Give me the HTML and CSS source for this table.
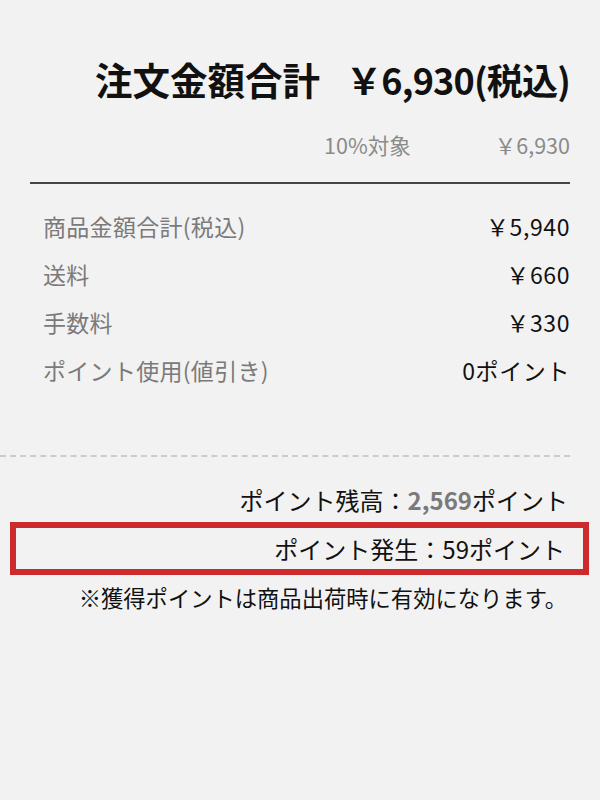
FILE: index.html
```html
<!DOCTYPE html>
<html lang="ja">
<head>
<meta charset="utf-8">
<link rel="stylesheet" href="styles.css">
</head>
<body>
<div class="summary">
  <div class="inner">
    <h1 class="total"><span class="total-label">注文金額合計</span><span class="total-value">￥6,930(税込)</span></h1>
    <div class="tax-row"><span class="tax-label">10%対象</span><span class="tax-value">￥6,930</span></div>
    <hr class="solid">
    <dl class="rows">
      <div class="row"><dt>商品金額合計(税込)</dt><dd>￥5,940</dd></div>
      <div class="row"><dt>送料</dt><dd>￥660</dd></div>
      <div class="row"><dt>手数料</dt><dd>￥330</dd></div>
      <div class="row"><dt>ポイント使用(値引き)</dt><dd>0ポイント</dd></div>
    </dl>
  </div>
  <hr class="dashed">
  <div class="points">
    <p class="balance">ポイント残高：<b>2,569</b>ポイント</p>
    <p class="earned">ポイント発生：59ポイント</p>
    <p class="note">※獲得ポイントは商品出荷時に有効になります。</p>
  </div>
</div>
</body>
</html>
```

FILE: styles.css
```css
html, body {
  margin: 0;
  padding: 0;
  background: #f2f2f2;
}
body {
  font-family: "Noto Sans CJK JP", "Noto Sans", sans-serif;
  color: #111;
  width: 600px;
  height: 800px;
}
.summary {
  padding-top: 52px;
}
.inner {
  padding: 0 30px;
}
.total {
  margin: 0;
  display: flex;
  justify-content: flex-end;
  align-items: baseline;
  gap: 26px;
  font-size: 36px;
  font-weight: 700;
  line-height: 54px;
  color: #111;
}
.total-label {
  font-size: 37.5px;
}
.total-value {
  letter-spacing: -0.8px;
}
.tax-row {
  display: flex;
  justify-content: flex-end;
  gap: 84px;
  margin-top: 24px;
  font-size: 21.5px;
  line-height: 30px;
  color: #8a8a8a;
}
.solid {
  margin: 22px 0 0;
  border: 0;
  height: 2px;
  background: #444;
}
.rows {
  margin: 17.5px 0 0;
  padding: 0 0 0 13px;
}
.row {
  display: flex;
  justify-content: space-between;
  font-size: 23px;
  line-height: 48.3px;
}
.row dt {
  color: #7a7a7a;
  letter-spacing: 0.3px;
}
.row dd {
  margin: 0;
  color: #111;
  letter-spacing: 0.6px;
}
.dashed {
  margin: 60px 30px 0 0;
  border: 0;
  border-top: 2px dashed #cccccc;
  height: 0;
}
.points {
  padding: 21px 11px 0 10px;
}
.points p {
  margin: 0;
  text-align: right;
  font-size: 24px;
  line-height: 42px;
  color: #111;
}
.points .balance {
  padding-right: 21px;
  line-height: 44px;
}
.balance b {
  color: #7a7a7a;
  font-weight: 700;
}
.points .earned {
  border: 6px solid #cd2a2e;
  padding-right: 18px;
  line-height: 41px;
}
.points .note {
  padding-right: 22px;
  margin-top: 1px;
  font-size: 22.3px;
}
```
